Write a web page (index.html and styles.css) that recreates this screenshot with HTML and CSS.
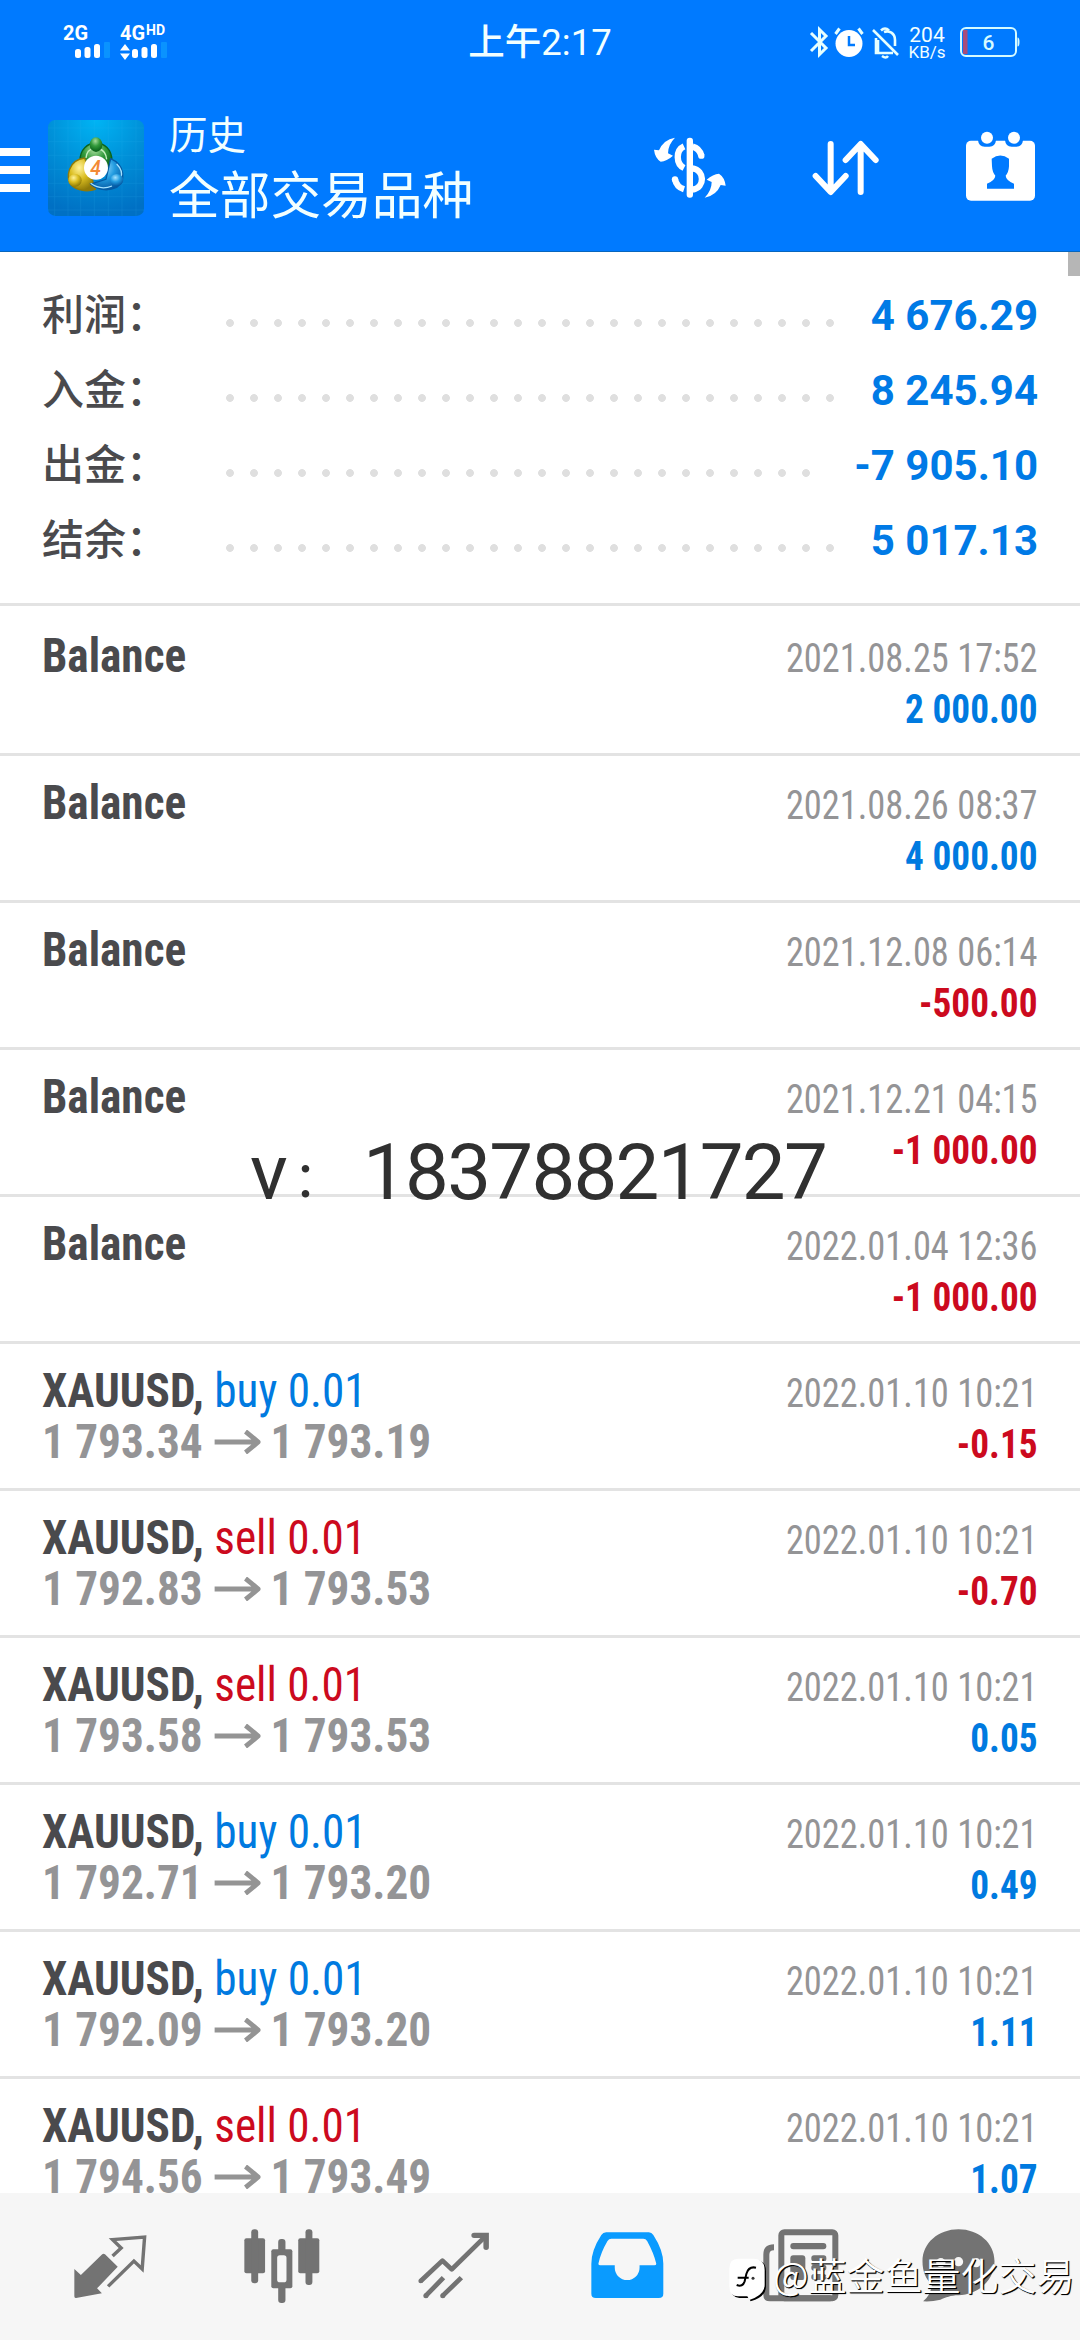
FILE: index.html
```html
<!DOCTYPE html>
<html lang="zh-CN">
<head>
<meta charset="utf-8">
<title>历史</title>
<link rel="stylesheet" href="styles.css">
</head>
<body>
<div class="screen">
<header class="header">
  <div class="status">
    <div class="signals">
      <div class="signal">
        <span class="net">2G</span>
        <svg class="bars bars-a" width="35" height="16" viewBox="0 0 35 16"><g fill="#fff"><rect x="0" y="5" width="6" height="9" rx="2.5"/><rect x="9.500" y="3" width="6" height="11" rx="2.500"/><rect x="19" y="0" width="6" height="14" rx="2.500"/></g><rect x="29" y="-2" width="6" height="16" rx="1" fill="#0a93ff"/></svg>
      </div>
      <div class="signal">
        <span class="net">4G<sup>HD</sup></span>
        <svg class="bars" width="47" height="16" viewBox="0 0 47 16"><g fill="#fff"><path d="M0 6.500 5 0l5 6.500zM0 9.500h10L5 16z"/><rect x="12" y="5" width="6" height="9" rx="2.500"/><rect x="21.500" y="3" width="6" height="11" rx="2.500"/><rect x="31" y="0" width="6" height="14" rx="2.500"/></g><rect x="41" y="-2" width="6" height="16" rx="1" fill="#0a93ff"/></svg>
      </div>
    </div>
    <div class="clock">上午2:17</div>
    <div class="indicators">
      <svg width="90" height="34" viewBox="0 0 90 34" fill="none" stroke="#e6ffff" stroke-width="3">
        <path d="M2 8 17 23 10.500 29.500V4.500L17 11 2 26"/>
        <circle cx="40" cy="18.500" r="13.500" fill="#fff" stroke="none"/>
        <path d="M40 11v9h6" stroke="#007aff" stroke-width="2.500"/><path d="m26.500 9 4-5.500M53.500 9l-4-5.500"/>
        <path d="m64 5 25 25M67 13v15h17M69 28V15M75 7c5-2 11 1 11 8v6" stroke-width="2.600"/><path d="M72 5.500q4-4 8 0M73 31q4 3 6 0" stroke-width="2.500"/>
      </svg>
      <div class="speed"><b>204</b><span>KB/s</span></div>
      <svg class="battery" width="60" height="30" viewBox="0 0 60 30"><rect x="1" y="1" width="55" height="28" rx="5" fill="none" stroke="#d5fbff" stroke-width="2"/><rect x="3" y="3" width="4.500" height="24" fill="#a94d78"/><path d="M57.500 10.500q2 0 2 4.500t-2 4.500z" fill="#d5fbff"/><text x="28.500" y="22.500" text-anchor="middle">6</text></svg>
    </div>
  </div>
  <div class="toolbar">
    <div class="menu"><i></i><i></i><i></i></div>
    <svg class="logo" width="96" height="96" viewBox="0 0 288 288">
      <defs>
        <radialGradient id="bg" cx=".5" cy="0" r="1"><stop offset="0" stop-color="#00b4f4"/><stop offset=".5" stop-color="#0090d8"/><stop offset="1" stop-color="#0070c4"/></radialGradient>
        <radialGradient id="gr" cx=".45" cy=".25" r=".7"><stop offset="0" stop-color="#a5dc9c"/><stop offset=".5" stop-color="#329a3c"/><stop offset="1" stop-color="#0b641c"/></radialGradient>
        <radialGradient id="ye" cx=".4" cy=".3" r=".7"><stop offset="0" stop-color="#fff29a"/><stop offset=".5" stop-color="#dabd20"/><stop offset="1" stop-color="#8f7a09"/></radialGradient>
        <radialGradient id="bl" cx=".4" cy=".3" r=".7"><stop offset="0" stop-color="#a5e2ff"/><stop offset=".5" stop-color="#239ce0"/><stop offset="1" stop-color="#055aa4"/></radialGradient>
      </defs>
      <rect width="288" height="288" rx="22" fill="url(#bg)"/>
      <path d="M20 0v288M60 0v288M98 0v288M139 0v288M181 0v288M222 0v288M264 0v288M0 24h288M0 65h288M0 106h288M0 148h288M0 190h288M0 230h288M0 270h288" stroke="#36b9f4" stroke-width="2" opacity=".2"/>
      <path d="M96 122c0-70 96-72 96 2l-22 30H114z" fill="url(#gr)" stroke="#0b641c" stroke-width="4"/>
      <path d="M114 114q2-26 24-28M176 118q-3-26-22-31" fill="none" stroke="#c6efc0" stroke-width="4"/>
      <path d="M110 114c-50 6-58 58-40 82 22 20 56 18 72 12l-12-38z" fill="url(#ye)" stroke="#8f7a09" stroke-width="4"/>
      <path d="M188 116c46 20 44 68 18 86-30 14-60 6-78-10l46-14z" fill="url(#bl)" stroke="#055aa4" stroke-width="4"/>
      <path d="M128 190q30 22 64 8M206 132q20 20 13 42" fill="none" stroke="#a5e2ff" stroke-width="4"/>
      <ellipse cx="144" cy="74" rx="19" ry="22" fill="url(#gr)"/><ellipse cx="81" cy="181" rx="20" ry="19" fill="url(#ye)"/><ellipse cx="206" cy="180" rx="20" ry="18" fill="url(#bl)"/>
      <circle cx="144" cy="143" r="36" fill="#fff"/>
      <text x="143" y="164" text-anchor="middle" class="logo-num">4</text>
    </svg>
    <div class="titles"><div class="t1">历史</div><div class="t2">全部交易品种</div></div>
    <svg class="act-dollar" width="80" height="70" viewBox="30 70 240 210" fill="#fff">
      <rect x="140" y="84" width="19" height="180" rx="9"/>
      <g fill="none" stroke="#fff" stroke-width="19"><path d="M132 110C106 122 108 163 132 175M132 239Q110 232 105 209"/><path d="M158 111Q178 116 184 138M158 176C194 182 196 233 158 240"/></g>
      <circle cx="184" cy="138" r="9.500"/><circle cx="105" cy="209" r="9.500"/>
      <path d="M105 84Q70 90 57 122L42 120Q45 145 62 156Q80 155 99 138L84 131Q84 105 105 84ZM194 264Q229 258 242 226L257 228Q254 203 237 192Q219 193 200 210L215 217Q215 243 194 264Z"/>
    </svg>
    <svg class="act-sort" width="74" height="64" viewBox="508 78 222 192" fill="none" stroke="#fff" stroke-width="18" stroke-linecap="round" stroke-linejoin="round"><path d="M573 102V245M528 198l45 48 45-48M663 246V103M618 150l45-48 45 48"/></svg>
    <svg class="act-cal" width="75" height="77" viewBox="969 55 225 231"><rect x="978" y="93" width="207" height="180" rx="15" fill="#fff"/><path d="M1014 80V92Q1016 111 1034 111H1048Q1066 111 1068 92V80ZM1095 80V92Q1097 111 1115 111H1129Q1147 111 1149 92V80Z" fill="#007aff"/><circle cx="1041" cy="84" r="18" fill="#fff"/><circle cx="1122" cy="84" r="18" fill="#fff"/><path d="M1055 147Q1081 128 1107 147V170Q1106 188 1097 198Q1098 212 1122 222V237H1041V222Q1065 212 1066 198Q1057 188 1056 170Z" fill="#007aff"/></svg>
  </div>
</header>
<div class="thumb"></div>
<main class="content">
  <section class="summary">
    <div class="sum"><span class="lab">利润：</span><i class="dots"></i><b>4 676.29</b></div>
    <div class="sum"><span class="lab">入金：</span><i class="dots"></i><b>8 245.94</b></div>
    <div class="sum"><span class="lab">出金：</span><i class="dots dots-short"></i><b>-7 905.10</b></div>
    <div class="sum"><span class="lab">结余：</span><i class="dots"></i><b>5 017.13</b></div>
  </section>
  <svg width="0" height="0" class="defs"><symbol id="arrow" viewBox="0 0 49 24"><path d="M0 12h46M33 1.500 46.500 12 33 22.500" fill="none" stroke="#949494" stroke-width="5"/></symbol></svg>
  <section class="list">
    <div class="row first"><div class="left"><div class="name">Balance</div></div><div class="right"><div class="date">2021.08.25 17:52</div><div class="val">2 000.00</div></div></div>
    <div class="row"><div class="left"><div class="name">Balance</div></div><div class="right"><div class="date">2021.08.26 08:37</div><div class="val">4 000.00</div></div></div>
    <div class="row"><div class="left"><div class="name">Balance</div></div><div class="right"><div class="date">2021.12.08 06:14</div><div class="val neg">-500.00</div></div></div>
    <div class="row"><div class="left"><div class="name">Balance</div></div><div class="right"><div class="date">2021.12.21 04:15</div><div class="val neg">-1 000.00</div></div></div>
    <div class="row"><div class="left"><div class="name">Balance</div></div><div class="right"><div class="date">2022.01.04 12:36</div><div class="val neg">-1 000.00</div></div></div>
    <div class="row"><div class="left"><div class="name">XAUUSD, <span class="buy">buy 0.01</span></div><div class="price"><span>1 793.34</span><svg><use href="#arrow"/></svg><span>1 793.19</span></div></div><div class="right"><div class="date">2022.01.10 10:21</div><div class="val neg">-0.15</div></div></div>
    <div class="row"><div class="left"><div class="name">XAUUSD, <span class="sell">sell 0.01</span></div><div class="price"><span>1 792.83</span><svg><use href="#arrow"/></svg><span>1 793.53</span></div></div><div class="right"><div class="date">2022.01.10 10:21</div><div class="val neg">-0.70</div></div></div>
    <div class="row"><div class="left"><div class="name">XAUUSD, <span class="sell">sell 0.01</span></div><div class="price"><span>1 793.58</span><svg><use href="#arrow"/></svg><span>1 793.53</span></div></div><div class="right"><div class="date">2022.01.10 10:21</div><div class="val">0.05</div></div></div>
    <div class="row"><div class="left"><div class="name">XAUUSD, <span class="buy">buy 0.01</span></div><div class="price"><span>1 792.71</span><svg><use href="#arrow"/></svg><span>1 793.20</span></div></div><div class="right"><div class="date">2022.01.10 10:21</div><div class="val">0.49</div></div></div>
    <div class="row"><div class="left"><div class="name">XAUUSD, <span class="buy">buy 0.01</span></div><div class="price"><span>1 792.09</span><svg><use href="#arrow"/></svg><span>1 793.20</span></div></div><div class="right"><div class="date">2022.01.10 10:21</div><div class="val">1.11</div></div></div>
    <div class="row"><div class="left"><div class="name">XAUUSD, <span class="sell">sell 0.01</span></div><div class="price"><span>1 794.56</span><svg><use href="#arrow"/></svg><span>1 793.49</span></div></div><div class="right"><div class="date">2022.01.10 10:21</div><div class="val">1.07</div></div></div>
  </section>
</main>
<nav class="tabs">
  <svg class="tab-quotes" viewBox="214 290 212 230" preserveAspectRatio="none"><path d="M215 416 234 434 296 372Q300 368 304 372L341 409 281 474 295 489 220 503Q215 504 215 498Z" fill="#737373"/><path d="M326 377 351 353 326 328 419 320 412 416 388 392 313 468" fill="none" stroke="#737373" stroke-width="10"/></svg>
  <svg class="tab-charts" viewBox="708 290 220 230" preserveAspectRatio="none" fill="#737373"><rect x="709" y="324" width="60" height="105" rx="6"/><rect x="729" y="297" width="20" height="162" rx="9"/><rect x="865" y="324" width="61" height="105" rx="6"/><rect x="886" y="297" width="20" height="167" rx="9"/><rect x="807" y="326" width="21" height="192" rx="9"/><rect x="787" y="357" width="61" height="117" rx="6"/><rect x="804" y="375" width="27" height="81" rx="8" fill="#f6f6f6"/></svg>
  <svg class="tab-trade" viewBox="1213 290 208 230" preserveAspectRatio="none" fill="none" stroke="#737373" stroke-width="14"><path d="M1221 452 1284 391 1311 417 1408 319" stroke-linejoin="round"/><path d="M1376 315H1411V351" stroke-width="16" stroke-linecap="round"/><path d="M1236 496 1287 442M1285 496 1339 442"/><g fill="#737373" stroke="none"><circle cx="1221" cy="452" r="7"/><circle cx="1236" cy="496" r="7.500"/><circle cx="1285" cy="496" r="7.500"/></g></svg>
  <svg class="tab-history" viewBox="146 290 212 230" preserveAspectRatio="none"><path fill="#0a9bff" fill-rule="evenodd" d="M190 306H314Q322 306 327 314Q356 360 356 400V490Q356 503 343 503H160Q147 503 147 490V400Q147 360 176 314Q181 306 190 306ZM205 325Q198 325 194 332Q175 365 168 398Q166 405 173 405H215V412A36 37 0 0 0 287 412V405H330Q337 405 335 398Q328 368 309 332Q305 325 298 325Z"/></svg>
  <svg class="tab-news" viewBox="127 35 228 230" fill="none" stroke="#737373" stroke-width="18"><path d="M160 96Q137 96 137 118V238Q137 249 148 249H330"/><rect x="182" y="51" width="162" height="198" rx="9"/><g fill="#737373" stroke="none"><rect x="209" y="83" width="108" height="19" rx="9"/><rect x="209" y="120" width="45" height="74" rx="9"/><rect x="272" y="120" width="45" height="18" rx="8"/><rect x="272" y="148" width="45" height="18" rx="8"/><rect x="272" y="176" width="45" height="18" rx="8"/></g></svg>
  <svg class="tab-chat" viewBox="605 35 218 230"><path d="M714 42C774 42 822 83 822 138 822 196 774 236 714 240 690 240 676 247 660 253Q632 260 608 258Q630 240 634 208C616 190 606 170 606 138 606 83 654 42 714 42Z" fill="#737373"/><g fill="#f6f6f6"><circle cx="661" cy="142" r="14"/><circle cx="714" cy="139" r="14"/><circle cx="767" cy="142" r="14"/></g></svg>
</nav>
<div class="phone-mark">v<span>：</span>18378821727</div>
<div class="author-mark">
  <svg width="42" height="48" viewBox="20 126 126 144"><path d="M54 138H100Q134 138 134 172V218Q132 250 88 262L82 252H54Q28 250 28 220V168Q28 138 54 138Z" fill="#000"/><path d="M50 134H96Q130 134 130 168V212Q130 244 84 258L78 247H50Q24 247 24 216V164Q24 134 50 134Z" fill="#fff"/><path d="M104 161Q82 156 75 180L70 202Q64 220 46 213M49 191H82" fill="none" stroke="#000" stroke-width="6"/><circle cx="95" cy="193" r="4.500" fill="#333"/></svg>
  <span>@蓝金鱼量化交易</span>
</div>
</div>
</body>
</html>
```
FILE: styles.css
```css
* { box-sizing: border-box; }
body { margin: 0; font-family: Roboto, "Noto Sans CJK SC", sans-serif; }
.screen { position: relative; width: 1080px; height: 2340px; overflow: hidden; background: #fff; display: flex; flex-direction: column; }
.screen svg { display: block; flex: none; }

.header { height: 252px; flex: none; background: #007aff; border-bottom: 1px solid #0866bd; color: #f2ffff; }
.status { height: 84px; display: grid; grid-template-columns: 1fr auto 1fr; align-items: center; }
.signals { display: flex; gap: 32px; padding-left: 63px; color: #fff; }
.net { display: block; height: 20px; font-size: 20px; line-height: 19px; font-weight: 700; white-space: nowrap; }
.net sup { font-size: 14px; line-height: 10px; vertical-align: 5px; margin-left: 1px; }
.signal { width: 25px; }
.bars { overflow: visible; }
.bars-a { margin-left: 12px; }
.clock { padding-top: 2px; font-size: 36.5px; line-height: 44px; font-weight: 450; }
.indicators { display: flex; align-items: center; justify-content: flex-end; padding-right: 60px; }
.speed { display: flex; flex-direction: column; align-items: center; width: 38px; margin: 3px 14px 0 9px; line-height: 17px; }
.speed b { font-size: 21px; font-weight: 400; }
.speed span { font-size: 17px; }
.battery text { fill: #d5fbff; font-size: 21px; font-weight: 500; }

.toolbar { height: 168px; display: flex; align-items: flex-start; padding-top: 36px; }
.menu { width: 30px; margin: 28px 18px 0 0; display: flex; flex-direction: column; gap: 10px; }
.menu i { height: 8px; background: #fff; }
.logo { width: 96px; }
.logo-num { font-size: 58px; font-weight: 500; font-style: italic; fill: #f38a35; }
.titles { width: 481px; margin: -11px 0 0 25px; font-weight: 400; font-family: "Noto Sans CJK SC", sans-serif; }
.t1 { font-size: 38.5px; line-height: 46px; }
.t2 { margin-top: 2px; font-size: 50.7px; line-height: 70px; }
.act-dollar { margin-top: 13px; }
.act-sort { margin: 16px 0 0 79px; }
.act-cal { margin: 8px 0 0 80px; }
.thumb { position: absolute; right: 0; top: 252px; width: 12px; height: 24px; background: #b6b6b6; }

.content { height: 1941px; flex: none; overflow: hidden; }
.summary { height: 354px; padding: 27px 42px 0; border-bottom: 3px solid #e3e3e3; }
.sum { height: 75px; display: flex; align-items: center; color: #4a4a4d; }
.lab { width: 176px; padding-bottom: 9px; font: 500 42px/60px "Noto Sans CJK SC", sans-serif; }
.dots { width: 624px; height: 24px; margin-top: 12px; background: radial-gradient(circle at 12px 12px, #dfdfdf 0 3.5px, transparent 4.3px) 0 0 / 24px 24px repeat-x; }
.dots-short { width: 600px; }
.sum b { margin-left: auto; padding-bottom: 3px; font-size: 42px; font-weight: 700; color: #007ae6; white-space: nowrap; }

.row { height: 147px; border-bottom: 3px solid #e3e3e3; padding: 19px 42px 0; display: flex; justify-content: space-between; font-stretch: 75%; white-space: nowrap; }
.row.first { height: 150px; padding-top: 22px; }
.left { transform: scaleX(.942); transform-origin: 0 0; }
.name { font-size: 48px; line-height: 56px; font-weight: 700; color: #4a4a4d; }
.name span { font-weight: 430; }
.name .buy { color: #007ae0; }
.name .sell { color: #cc0a1e; }
.price { display: flex; align-items: center; margin-top: -5px; font-size: 48px; line-height: 56px; font-weight: 700; color: #949496; }
.price svg { width: 49px; height: 24px; margin: 0 11px 0 12px; }
.right { text-align: right; }
.date { font-size: 40px; line-height: 51px; color: #949496; padding-top: 5px; transform: scaleX(.91); transform-origin: 100% 0; }
.val { font-size: 40px; line-height: 51px; font-weight: 700; color: #007ae0; transform: scaleX(.932); transform-origin: 100% 0; }
.val.neg { color: #cc0a1e; }

.tabs { height: 147px; flex: none; background: #f6f6f6; display: flex; padding: 34px 0 0 74px; }
.tabs svg { height: 76.7px; width: 73px; }
.tabs .tab-charts { margin-left: 97px; width: 76px; }
.tabs .tab-trade { margin-left: 98px; width: 71.6px; }
.tabs .tab-history { margin-left: 101px; }
.tabs .tab-news { margin-left: 99px; width: 76px; }
.tabs .tab-chat { margin-left: 83px; }

.phone-mark { position: absolute; left: 250px; top: 1126px; font-size: 78px; line-height: 94px; font-weight: 370; color: #303030; letter-spacing: -1.75px; white-space: nowrap; }
.phone-mark span { display: inline-block; width: 77px; padding-left: 7px; font-size: 50px; line-height: 50px; vertical-align: 2px; }
.author-mark { position: absolute; left: 728px; top: 2250px; display: flex; color: #fff; font: 350 38px/50px "Noto Sans CJK SC", sans-serif; text-shadow: 1px 1px 0 #000, 1px 1px 1px #000; white-space: nowrap; }
.author-mark svg { margin-top: 6px; }
.author-mark span { margin: -1px 0 0 3px; }
```
